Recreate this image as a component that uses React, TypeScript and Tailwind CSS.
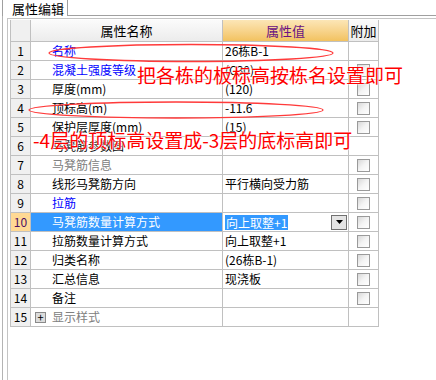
import React from 'react';

type Row = {
  n: number;
  name: string;
  tone?: 'blue' | 'gray';
  value?: string;
  check: boolean;
  selected?: boolean;
  group?: boolean;
};

const rows: Row[] = [
  { n: 1, name: '名称', tone: 'blue', value: '26栋B-1', check: false },
  { n: 2, name: '混凝土强度等级', tone: 'blue', value: '(C30)', check: true },
  { n: 3, name: '厚度(mm)', value: '(120)', check: true },
  { n: 4, name: '顶标高(m)', value: '-11.6', check: true },
  { n: 5, name: '保护层厚度(mm)', value: '(15)', check: true },
  { n: 6, name: '马凳筋参数图', check: false },
  { n: 7, name: '马凳筋信息', tone: 'gray', check: true },
  { n: 8, name: '线形马凳筋方向', value: '平行横向受力筋', check: true },
  { n: 9, name: '拉筋', tone: 'blue', check: true },
  { n: 10, name: '马凳筋数量计算方式', value: '向上取整+1', check: true, selected: true },
  { n: 11, name: '拉筋数量计算方式', value: '向上取整+1', check: true },
  { n: 12, name: '归类名称', value: '(26栋B-1)', check: true },
  { n: 13, name: '汇总信息', value: '现浇板', check: true },
  { n: 14, name: '备注', check: true },
  { n: 15, name: '显示样式', tone: 'gray', check: false, group: true }
];

const Checkbox = () => (
  <div className="h-[13px] w-[13px] border border-[#9a9a9a] bg-linear-to-br from-[#d8d8d8] via-[#f4f4f4] to-white" />
);

const PropRow = ({ row }: { row: Row }) => {
  const toneClass =
    row.tone === 'blue' ? 'text-[#0000ff]' : row.tone === 'gray' ? 'text-[#808080]' : 'text-black';

  return (
    <div className="flex h-[19px] border-b border-[#c0c0c0]">
      <div
        className={`flex w-[20px] items-center justify-center border-r border-[#c0c0c0] ${
          row.selected ? 'bg-[#ffd994] text-[#4b0f63]' : 'bg-[#f0f0f0] text-black'
        }`}
      >
        {row.n}
      </div>
      <div
        className={`flex w-[192px] items-center border-r border-[#c0c0c0] ${
          row.selected ? 'bg-[#3399ff] text-white' : toneClass
        } ${row.group ? 'pl-[4px]' : 'pl-[21px]'}`}
      >
        {row.group && (
          <span className="mr-[6px] flex h-[11px] w-[11px] items-center justify-center border border-[#8a8a8a] bg-[#dcdcdc] text-[11px] leading-none text-black">
            +
          </span>
        )}
        {row.name}
      </div>
      <div className="flex w-[126px] items-center justify-between border-r border-[#c0c0c0] pl-[2px]">
        {row.selected ? (
          <>
            <span className="bg-[#3399ff] px-[1px] leading-[15px] text-white">{row.value}</span>
            <span className="mr-[1px] flex h-[15px] w-[16px] items-center justify-center border border-[#707070] bg-[#e4e4e4]">
              <svg width="7" height="4" viewBox="0 0 7 4">
                <path d="M0 0h7L3.5 4z" fill="#000" />
              </svg>
            </span>
          </>
        ) : (
          <span>{row.value}</span>
        )}
      </div>
      <div className="flex w-[30px] items-center justify-center border-r border-[#c0c0c0]">
        {row.check && <Checkbox />}
      </div>
    </div>
  );
};

const App = () => {
  return (
    <div className="relative flex h-[380px] w-[436px] flex-col overflow-hidden bg-white font-['SimSun','Noto_Sans_CJK_SC',sans-serif] text-[12px] text-black">
      {/* tab strip */}
      <div className="flex h-[16px]">
        <div className="ml-[2px] flex w-[66px] items-center border-x border-[#a0a0a0] pl-[9px] text-[13px] leading-none">
          属性编辑
        </div>
        <div className="flex-1 border-b border-[#a0a0a0]" />
      </div>

      <div className="ml-[2px] flex flex-1 border-l border-[#b4b4b4]">
        <div className="mt-[2px] ml-[4px] flex-1 border-t border-l border-[#c4c4c4] pt-[1px] pl-[2px]">
          <div className="w-[369px] border-l border-[#c0c0c0]">
            {/* header */}
            <div className="flex h-[22px] border-b border-[#c0c0c0] text-[13px]">
              <div className="w-[20px] border-r border-[#c0c0c0] bg-[#f0f0f0]" />
              <div className="flex w-[192px] items-center justify-center border-r border-[#c0c0c0] bg-linear-to-b from-[#fbfbfb] to-[#ececec]">
                属性名称
              </div>
              <div className="flex w-[126px] items-center justify-center border-r border-[#c0c0c0] bg-linear-to-b from-[#fce6b6] to-[#f2c25f] text-[#6a1282]">
                属性值
              </div>
              <div className="flex w-[30px] items-center justify-center border-r border-[#c0c0c0] bg-linear-to-b from-[#fafafa] to-[#ececec]">
                附加
              </div>
            </div>
            {rows.map((row) => (
              <PropRow key={row.n} row={row} />
            ))}
          </div>
        </div>
      </div>

      {/* hand-drawn notes over the grid */}
      <svg className="pointer-events-none absolute top-0 left-0" width="436" height="380">
        <ellipse cx="191" cy="53" rx="142" ry="8.5" fill="none" stroke="#ff3a3a" strokeWidth="1.3" />
        <ellipse cx="176" cy="110" rx="147" ry="8" fill="none" stroke="#ff3a3a" strokeWidth="1.3" />
      </svg>
      <div className="pointer-events-none absolute top-[64px] left-[137px] font-['Noto_Sans_CJK_SC',sans-serif] text-[19px] leading-[22px] whitespace-nowrap text-[#ff0000] [text-shadow:0_0_2px_#fff,0_0_2px_#fff]">
        把各栋的板标高按栋名设置即可
      </div>
      <div className="pointer-events-none absolute top-[129px] left-[33px] font-['Noto_Sans_CJK_SC',sans-serif] text-[19px] leading-[22px] whitespace-nowrap text-[#ff0000] [text-shadow:0_0_2px_#fff,0_0_2px_#fff]">
        -4层的顶标高设置成-3层的底标高即可
      </div>
    </div>
  );
};

export default App;
